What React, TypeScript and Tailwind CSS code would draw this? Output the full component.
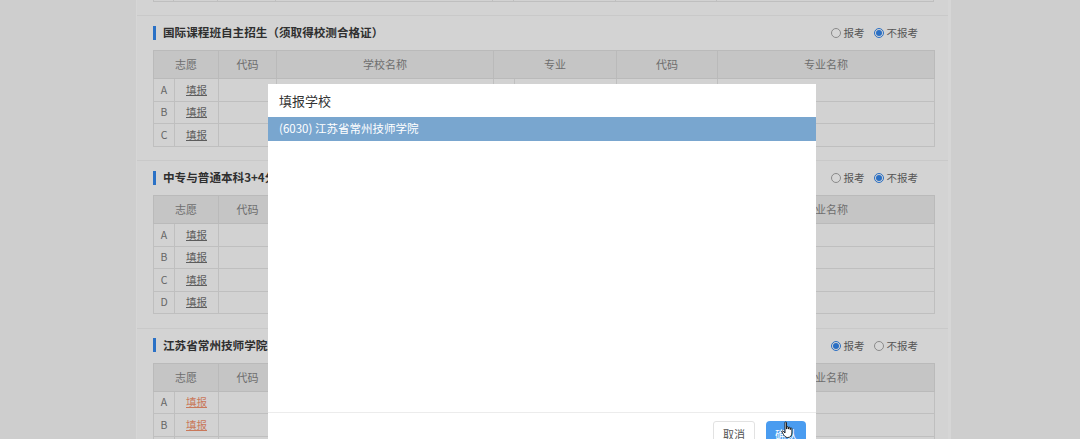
import React from "react";

type Section = {
    title: string;
    rows: string[];
    apply: boolean;
    orange?: boolean;
};

const sections: Section[] = [
    { title: "国际课程班自主招生（须取得校测合格证）", rows: ["A", "B", "C"], apply: false },
    { title: "中专与普通本科3+4分段培养项目", rows: ["A", "B", "C", "D"], apply: false },
    { title: "江苏省常州技师学院五年制高职", rows: ["A", "B", "C"], apply: true, orange: true },
];

function Radio({ checked, label }: { checked: boolean; label: string }) {
    return (
        <span className="flex items-center gap-[3px]">
            {checked ? (
                <span className="w-[10px] h-[10px] rounded-full border border-[#2a6fc4] bg-[#d3d3d3] flex items-center justify-center">
                    <span className="w-[6px] h-[6px] rounded-full bg-[#2a6fc4]" />
                </span>
            ) : (
                <span className="w-[10px] h-[10px] rounded-full border border-[#8a8a8a] bg-[#d6d6d6]" />
            )}
            <span>{label}</span>
        </span>
    );
}

function Card({ section }: { section: Section }) {
    const link = section.orange ? "text-[#c9785a]" : "text-[#5c5c5c]";
    return (
        <div className="bg-[#d3d3d3] border-b border-[#c9c9c9] pt-[7px] pb-[13.5px] px-[16px]">
            <div className="h-[20px] flex items-center justify-between">
                <div className="flex items-center gap-[7px]">
                    <span className="w-[3px] h-[14px] bg-[#2a71c6]" />
                    <span className="text-[11.6px] font-bold text-[#2f2f2f]">{section.title}</span>
                </div>
                <div className="flex items-center gap-[9px] text-[10.5px] text-[#555] pr-[14px]">
                    <Radio checked={section.apply} label="报考" />
                    <Radio checked={!section.apply} label="不报考" />
                </div>
            </div>
            <table className="mt-[7px] w-[781px] border-collapse table-fixed">
                <colgroup>
                    <col className="w-[21px]" />
                    <col className="w-[44px]" />
                    <col className="w-[58px]" />
                    <col className="w-[217px]" />
                    <col className="w-[21px]" />
                    <col className="w-[102px]" />
                    <col className="w-[101px]" />
                    <col className="w-[217px]" />
                </colgroup>
                <thead>
                    <tr className="h-[28px] bg-[#c5c5c5] text-[#6e6e6e] text-[11px]">
                        <th colSpan={2} className="border border-[#bababa] font-normal">志愿</th>
                        <th className="border border-[#bababa] font-normal">代码</th>
                        <th className="border border-[#bababa] font-normal">学校名称</th>
                        <th colSpan={2} className="border border-[#bababa] font-normal">专业</th>
                        <th className="border border-[#bababa] font-normal">代码</th>
                        <th className="border border-[#bababa] font-normal">专业名称</th>
                    </tr>
                </thead>
                <tbody>
                    {section.rows.map((r) => (
                        <tr key={r} className="h-[22.5px] bg-[#d2d2d2] text-[#666] text-[10.5px]">
                            <td className="border border-[#bfbfbf] text-center">{r}</td>
                            <td className="border border-[#bfbfbf] text-center">
                                <span className={`underline ${link}`}>填报</span>
                            </td>
                            <td className="border border-[#bfbfbf]" />
                            <td className="border border-[#bfbfbf]" />
                            <td className="border border-[#bfbfbf]" />
                            <td className="border border-[#bfbfbf]" />
                            <td className="border border-[#bfbfbf]" />
                            <td className="border border-[#bfbfbf]" />
                        </tr>
                    ))}
                </tbody>
            </table>
        </div>
    );
}

function HandCursor() {
    return (
        <svg width="14" height="19" viewBox="0 0 14 19" className="absolute left-[781px] top-[421px]">
            <path
                d="M4 1.5c0-.8 1.5-.8 1.5 0V8h.3V6.3c0-.8 1.5-.8 1.5 0V8h.3V6.8c0-.8 1.5-.8 1.5 0V8.5h.3V7.6c0-.8 1.5-.8 1.5 0V12c0 2.5-1.5 4.5-4 4.5H6.5C4.5 16.5 3.5 15 2.5 13.5L1 11c-.5-.8.5-1.5 1.2-.9L4 12V1.5z"
                fill="#fff"
                stroke="#111"
                strokeWidth="0.9"
            />
        </svg>
    );
}

export default function App() {
    return (
        <div className="relative w-[1080px] h-[439px] overflow-hidden bg-[#cecece] font-['Noto_Sans_CJK_SC',sans-serif]">
            <div className="ml-[136px] w-[815px] border-l border-r-[3px] border-[#d6d6d6]">
                {/* tail of the card above, scrolled out of view */}
                <div className="h-[16px] bg-[#d3d3d3] border-b border-[#c9c9c9] px-[16px]">
                    <div className="w-[781px] h-[2px] flex border-b border-[#bfbfbf] bg-[#d2d2d2]">
                        <div className="w-[21px] border-x border-[#bfbfbf]" />
                        <div className="w-[44px] border-r border-[#bfbfbf]" />
                        <div className="w-[58px] border-r border-[#bfbfbf]" />
                        <div className="w-[217px] border-r border-[#bfbfbf]" />
                        <div className="w-[21px] border-r border-[#bfbfbf]" />
                        <div className="w-[102px] border-r border-[#bfbfbf]" />
                        <div className="w-[101px] border-r border-[#bfbfbf]" />
                        <div className="flex-1 border-r border-[#bfbfbf]" />
                    </div>
                </div>
                {sections.map((s) => (
                    <Card key={s.title} section={s} />
                ))}
            </div>

            <div className="absolute left-[268px] top-[84px] w-[548px] h-[380px] bg-white flex flex-col">
                <div className="h-[33px] flex items-center px-[11px] text-[13px] text-[#333]">填报学校</div>
                <div className="h-[24px] flex items-center px-[11px] bg-[#79a6cf] text-[11.5px] text-white">
                    (6030) 江苏省常州技师学院
                </div>
                <div className="h-[271px]" />
                <div className="border-t border-[#ececec] flex justify-end gap-[11px] pt-[8px] pr-[10px]">
                    <button className="w-[42px] h-[26px] border border-[#e2e2e2] rounded-[3px] bg-white text-[11px] text-[#555]">
                        取消
                    </button>
                    <button className="w-[40px] h-[26px] rounded-[4px] bg-[#4a9cf0] text-[11px] text-white">
                        确认
                    </button>
                </div>
            </div>
            <HandCursor />
        </div>
    );
}
